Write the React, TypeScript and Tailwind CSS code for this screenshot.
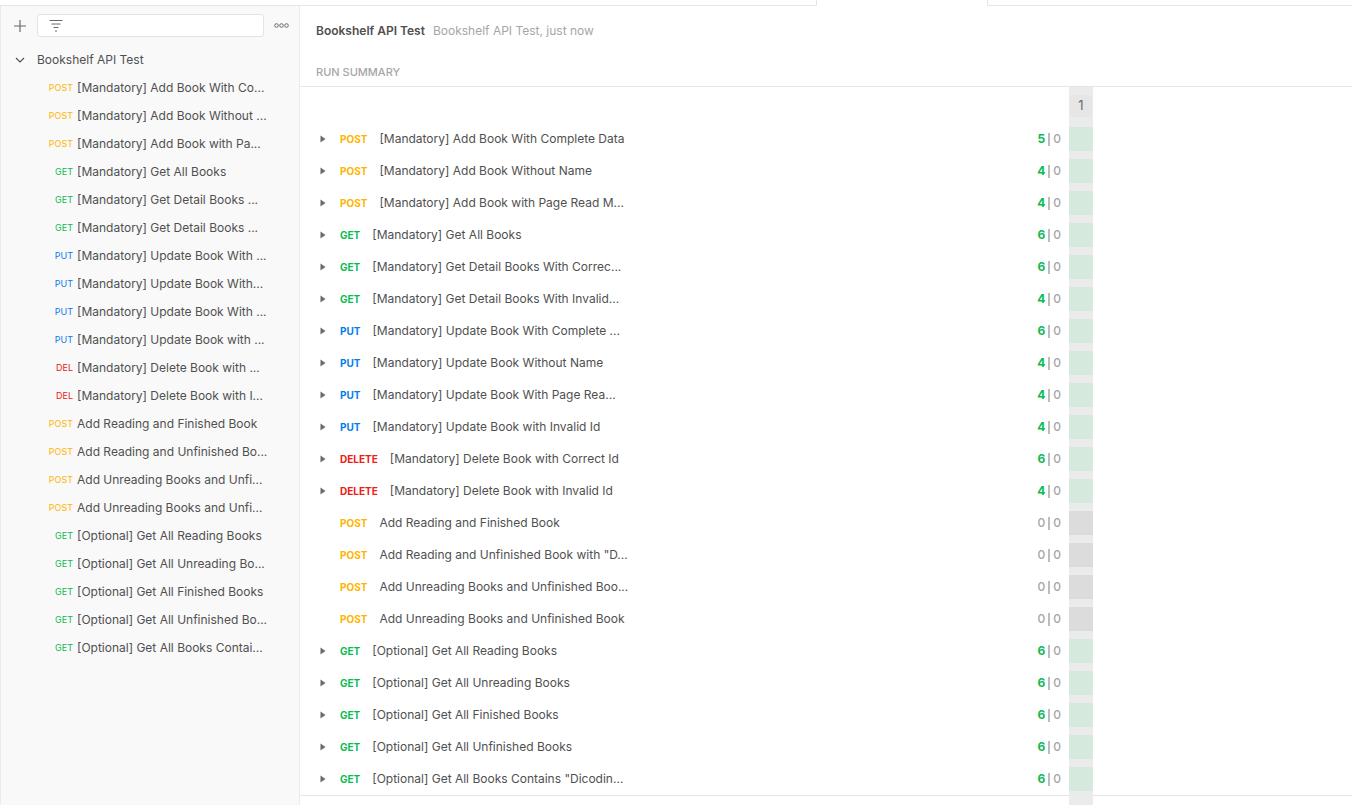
import React from "react";

type M = "POST" | "GET" | "PUT" | "DELETE";

const methodColor: Record<M, string> = {
  POST: "text-[#ffb400]",
  GET: "text-[#0cbb52]",
  PUT: "text-[#097bed]",
  DELETE: "text-[#eb2013]",
};

const sideItems: [M, string][] = [
  ["POST", "[Mandatory] Add Book With Co..."],
  ["POST", "[Mandatory] Add Book Without ..."],
  ["POST", "[Mandatory] Add Book with Pa..."],
  ["GET", "[Mandatory] Get All Books"],
  ["GET", "[Mandatory] Get Detail Books ..."],
  ["GET", "[Mandatory] Get Detail Books ..."],
  ["PUT", "[Mandatory] Update Book With ..."],
  ["PUT", "[Mandatory] Update Book With..."],
  ["PUT", "[Mandatory] Update Book With ..."],
  ["PUT", "[Mandatory] Update Book with ..."],
  ["DELETE", "[Mandatory] Delete Book with ..."],
  ["DELETE", "[Mandatory] Delete Book with I..."],
  ["POST", "Add Reading and Finished Book"],
  ["POST", "Add Reading and Unfinished Bo..."],
  ["POST", "Add Unreading Books and Unfi..."],
  ["POST", "Add Unreading Books and Unfi..."],
  ["GET", "[Optional] Get All Reading Books"],
  ["GET", "[Optional] Get All Unreading Bo..."],
  ["GET", "[Optional] Get All Finished Books"],
  ["GET", "[Optional] Get All Unfinished Bo..."],
  ["GET", "[Optional] Get All Books Contai..."],
];

const rows: [M, string, number][] = [
  ["POST", "[Mandatory] Add Book With Complete Data", 5],
  ["POST", "[Mandatory] Add Book Without Name", 4],
  ["POST", "[Mandatory] Add Book with Page Read M...", 4],
  ["GET", "[Mandatory] Get All Books", 6],
  ["GET", "[Mandatory] Get Detail Books With Correc...", 6],
  ["GET", "[Mandatory] Get Detail Books With Invalid...", 4],
  ["PUT", "[Mandatory] Update Book With Complete ...", 6],
  ["PUT", "[Mandatory] Update Book Without Name", 4],
  ["PUT", "[Mandatory] Update Book With Page Rea...", 4],
  ["PUT", "[Mandatory] Update Book with Invalid Id", 4],
  ["DELETE", "[Mandatory] Delete Book with Correct Id", 6],
  ["DELETE", "[Mandatory] Delete Book with Invalid Id", 4],
  ["POST", "Add Reading and Finished Book", 0],
  ["POST", "Add Reading and Unfinished Book with \"D...", 0],
  ["POST", "Add Unreading Books and Unfinished Boo...", 0],
  ["POST", "Add Unreading Books and Unfinished Book", 0],
  ["GET", "[Optional] Get All Reading Books", 6],
  ["GET", "[Optional] Get All Unreading Books", 6],
  ["GET", "[Optional] Get All Finished Books", 6],
  ["GET", "[Optional] Get All Unfinished Books", 6],
  ["GET", "[Optional] Get All Books Contains \"Dicodin...", 6],
];

function Triangle() {
  return (
    <svg width="6" height="8" viewBox="0 0 6 8">
      <path d="M0.5 0.5 L5.5 4 L0.5 7.5 Z" fill="#6b6b6b" />
    </svg>
  );
}

export default function App() {
  return (
    <div
      className="w-[1352px] h-[805px] overflow-hidden bg-white flex flex-col"
      style={{ fontFamily: "Inter, 'Noto Sans', sans-serif" }}
    >
      {/* top tab strip */}
      <div className="h-[6px] flex shrink-0">
        <div className="w-[816px] border-b border-[#e6e6e6] bg-white" />
        <div className="w-[172px] border-l border-r border-[#e6e6e6] bg-white" />
        <div className="flex-1 border-b border-[#e6e6e6] bg-white" />
      </div>
      <div className="flex flex-1 min-h-0">
        {/* sidebar */}
        <div className="w-[300px] shrink-0 bg-[#f9f9f9] border-l border-r border-[#ebebeb] flex flex-col">
          <div className="flex items-center h-[23px] mt-[8px]">
            <div className="w-[36px] flex justify-center pl-[1px]">
              <svg width="14" height="14" viewBox="0 0 14 14">
                <path d="M7 1 V13 M1 7 H13" stroke="#6b6b6b" strokeWidth="1.2" />
              </svg>
            </div>
            <div className="w-[227px] h-[23px] bg-white border border-[#e3e3e3] rounded-[3px] flex items-center pl-[11px]">
              <svg width="14" height="13" viewBox="0 0 14 13">
                <path d="M0.5 1.5 H13.5 M2.5 5 H11.5 M4.5 8.5 H9.5 M6 12 H8" stroke="#6b6b6b" strokeWidth="1" />
              </svg>
            </div>
            <div className="flex-1 flex justify-center">
              <svg width="15" height="5" viewBox="0 0 15 5">
                <circle cx="2.5" cy="2.5" r="1.8" fill="none" stroke="#6b6b6b" strokeWidth="1" />
                <circle cx="7.5" cy="2.5" r="1.8" fill="none" stroke="#6b6b6b" strokeWidth="1" />
                <circle cx="12.5" cy="2.5" r="1.8" fill="none" stroke="#6b6b6b" strokeWidth="1" />
              </svg>
            </div>
          </div>
          <div className="mt-[9px] flex items-center h-[28px]">
            <div className="w-[36px] flex justify-center pl-[2px]">
              <svg width="10" height="6" viewBox="0 0 10 6">
                <path d="M1 1 L5 5 L9 1" stroke="#505050" strokeWidth="1.1" fill="none" />
              </svg>
            </div>
            <span className="text-[12px] text-[#505050]">Bookshelf API Test</span>
          </div>
          {sideItems.map(([m, t], i) => (
            <div key={i} className="flex items-center h-[28px]">
              <div className={`w-[72px] text-right text-[9px] ${methodColor[m]}`}>
                {m === "DELETE" ? "DEL" : m}
              </div>
              <span className="ml-[4px] text-[12px] text-[#505050] whitespace-nowrap">{t}</span>
            </div>
          ))}
        </div>
        {/* main */}
        <div className="flex-1 flex flex-col min-w-0">
          <div className="pl-[16px] h-[81px] border-b border-[#e6e6e6] flex flex-col">
            <div className="mt-[17px] h-[16px] flex items-center text-[12px]">
              <span className="font-semibold text-[#505050]">Bookshelf API Test</span>
              <span className="ml-[8px] text-[#a6a6a6]">Bookshelf API Test, just now</span>
            </div>
            <div className="mt-[25px] h-[16px] flex items-center text-[11px] font-medium text-[#a6a6a6]">
              RUN SUMMARY
            </div>
          </div>
          <div className="flex flex-1 min-h-0">
            <div className="w-[769px] flex flex-col">
              <div className="h-[36px]" />
              <div className="border-b border-[#e6e6e6]">
                {rows.map(([m, t, n], i) => {
                  const hasTests = n > 0;
                  return (
                    <div key={i} className="flex items-center h-[32px]">
                      <div className="w-[40px] flex justify-end pr-[14px]">{hasTests ? <Triangle /> : null}</div>
                      <span className={`text-[10px] font-bold ${methodColor[m]}`}>{m}</span>
                      <span className="ml-[12px] text-[12px] text-[#505050] whitespace-nowrap">{t}</span>
                      <div className="flex-1" />
                      <div className="flex items-center text-[12px] pr-[8px]">
                        <span className={hasTests ? "font-bold text-[#0cbb52]" : "text-[#a6a6a6] font-medium"}>{n}</span>
                        <span className="mx-[3px] w-[2px] h-[13px] bg-[#bdbdbd]" />
                        <span className="text-[#a6a6a6] font-medium">0</span>
                      </div>
                    </div>
                  );
                })}
              </div>
            </div>
            <div className="w-[24px] bg-[#ebebeb] flex flex-col items-center">
              <div className="mt-[8px] w-[22px] h-[22px] rounded-[3px] bg-[#e6e6e6] flex items-center justify-center text-[13px] text-[#6b6b6b]">
                1
              </div>
              <div className="mt-[10px] w-full flex flex-col">
                {rows.map(([, , n], i) => (
                  <div key={i} className="h-[32px] w-full flex items-start">
                    <div className={`w-full h-[24px] ${n > 0 ? "bg-[#d5eadd]" : "bg-[#dcdcdc]"}`} />
                  </div>
                ))}
              </div>
            </div>
            <div className="flex-1 flex flex-col">
              <div className="h-[709px] border-b border-[#e6e6e6]" />
            </div>
          </div>
        </div>
      </div>
    </div>
  );
}
